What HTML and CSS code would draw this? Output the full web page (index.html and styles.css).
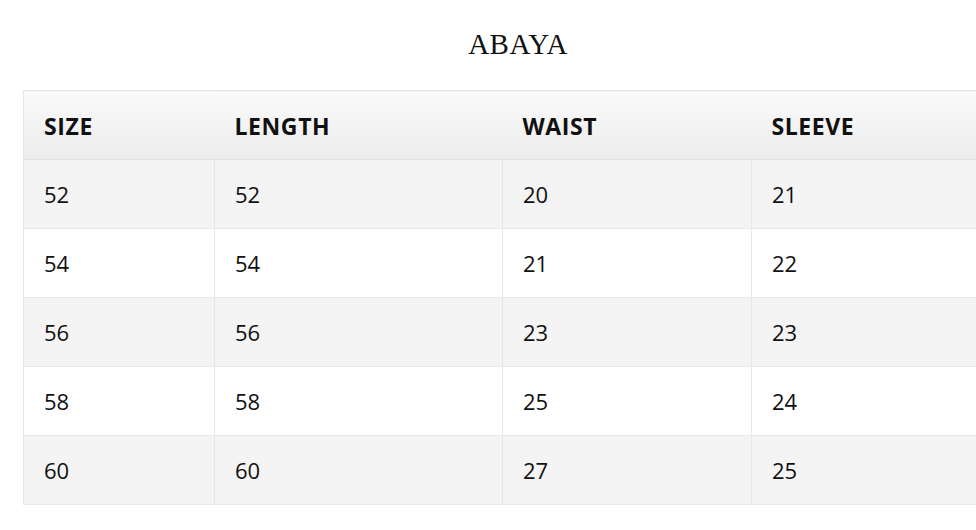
FILE: index.html
```html
<!DOCTYPE html>
<html>
<head>
<meta charset="utf-8">
<link rel="stylesheet" href="styles.css">
</head>
<body>
<div class="page">
  <h1 class="title">ABAYA</h1>
  <table class="sizes">
    <colgroup>
      <col class="c1"><col class="c2"><col class="c3"><col class="c4">
    </colgroup>
    <thead>
      <tr><th>SIZE</th><th>LENGTH</th><th>WAIST</th><th>SLEEVE</th></tr>
    </thead>
    <tbody>
      <tr><td>52</td><td>52</td><td>20</td><td>21</td></tr>
      <tr><td>54</td><td>54</td><td>21</td><td>22</td></tr>
      <tr><td>56</td><td>56</td><td>23</td><td>23</td></tr>
      <tr><td>58</td><td>58</td><td>25</td><td>24</td></tr>
      <tr><td>60</td><td>60</td><td>27</td><td>25</td></tr>
    </tbody>
  </table>
</div>
</body>
</html>
```
FILE: styles.css
```css
html, body {
  margin: 0;
  padding: 0;
  background: #fff;
  overflow: hidden;
}
.page {
  width: 990px;
  margin-left: 23px;
  padding-top: 27px;
  font-family: "Open Sans", "Noto Sans", sans-serif;
  color: #111;
}
.title {
  margin: 0 0 29px 0;
  text-align: center;
  font-family: "Liberation Serif", serif;
  font-weight: normal;
  font-size: 29px;
  line-height: 34px;
  letter-spacing: 0.5px;
  color: #111;
}
.sizes {
  width: 990px;
  table-layout: fixed;
  border-collapse: collapse;
  border: 1px solid #e6e6e6;
}
.c1 { width: 191px; }
.c2 { width: 288px; }
.c3 { width: 249px; }
.c4 { width: 262px; }
.sizes th {
  height: 66px;
  padding: 2px 0 0 20px;
  text-align: left;
  font-weight: 700;
  font-size: 23px;
  letter-spacing: 0.6px;
  background: linear-gradient(#fafafa, #ececec);
  border-bottom: 1px solid #e2e2e2;
}
.sizes td {
  height: 68px;
  padding: 0 0 0 20px;
  font-size: 22px;
  border: 1px solid #e8e8e8;
}
.sizes tbody tr:nth-child(odd) td { background: #f4f4f4; }
.sizes tbody tr:nth-child(even) td { background: #fff; }
```
